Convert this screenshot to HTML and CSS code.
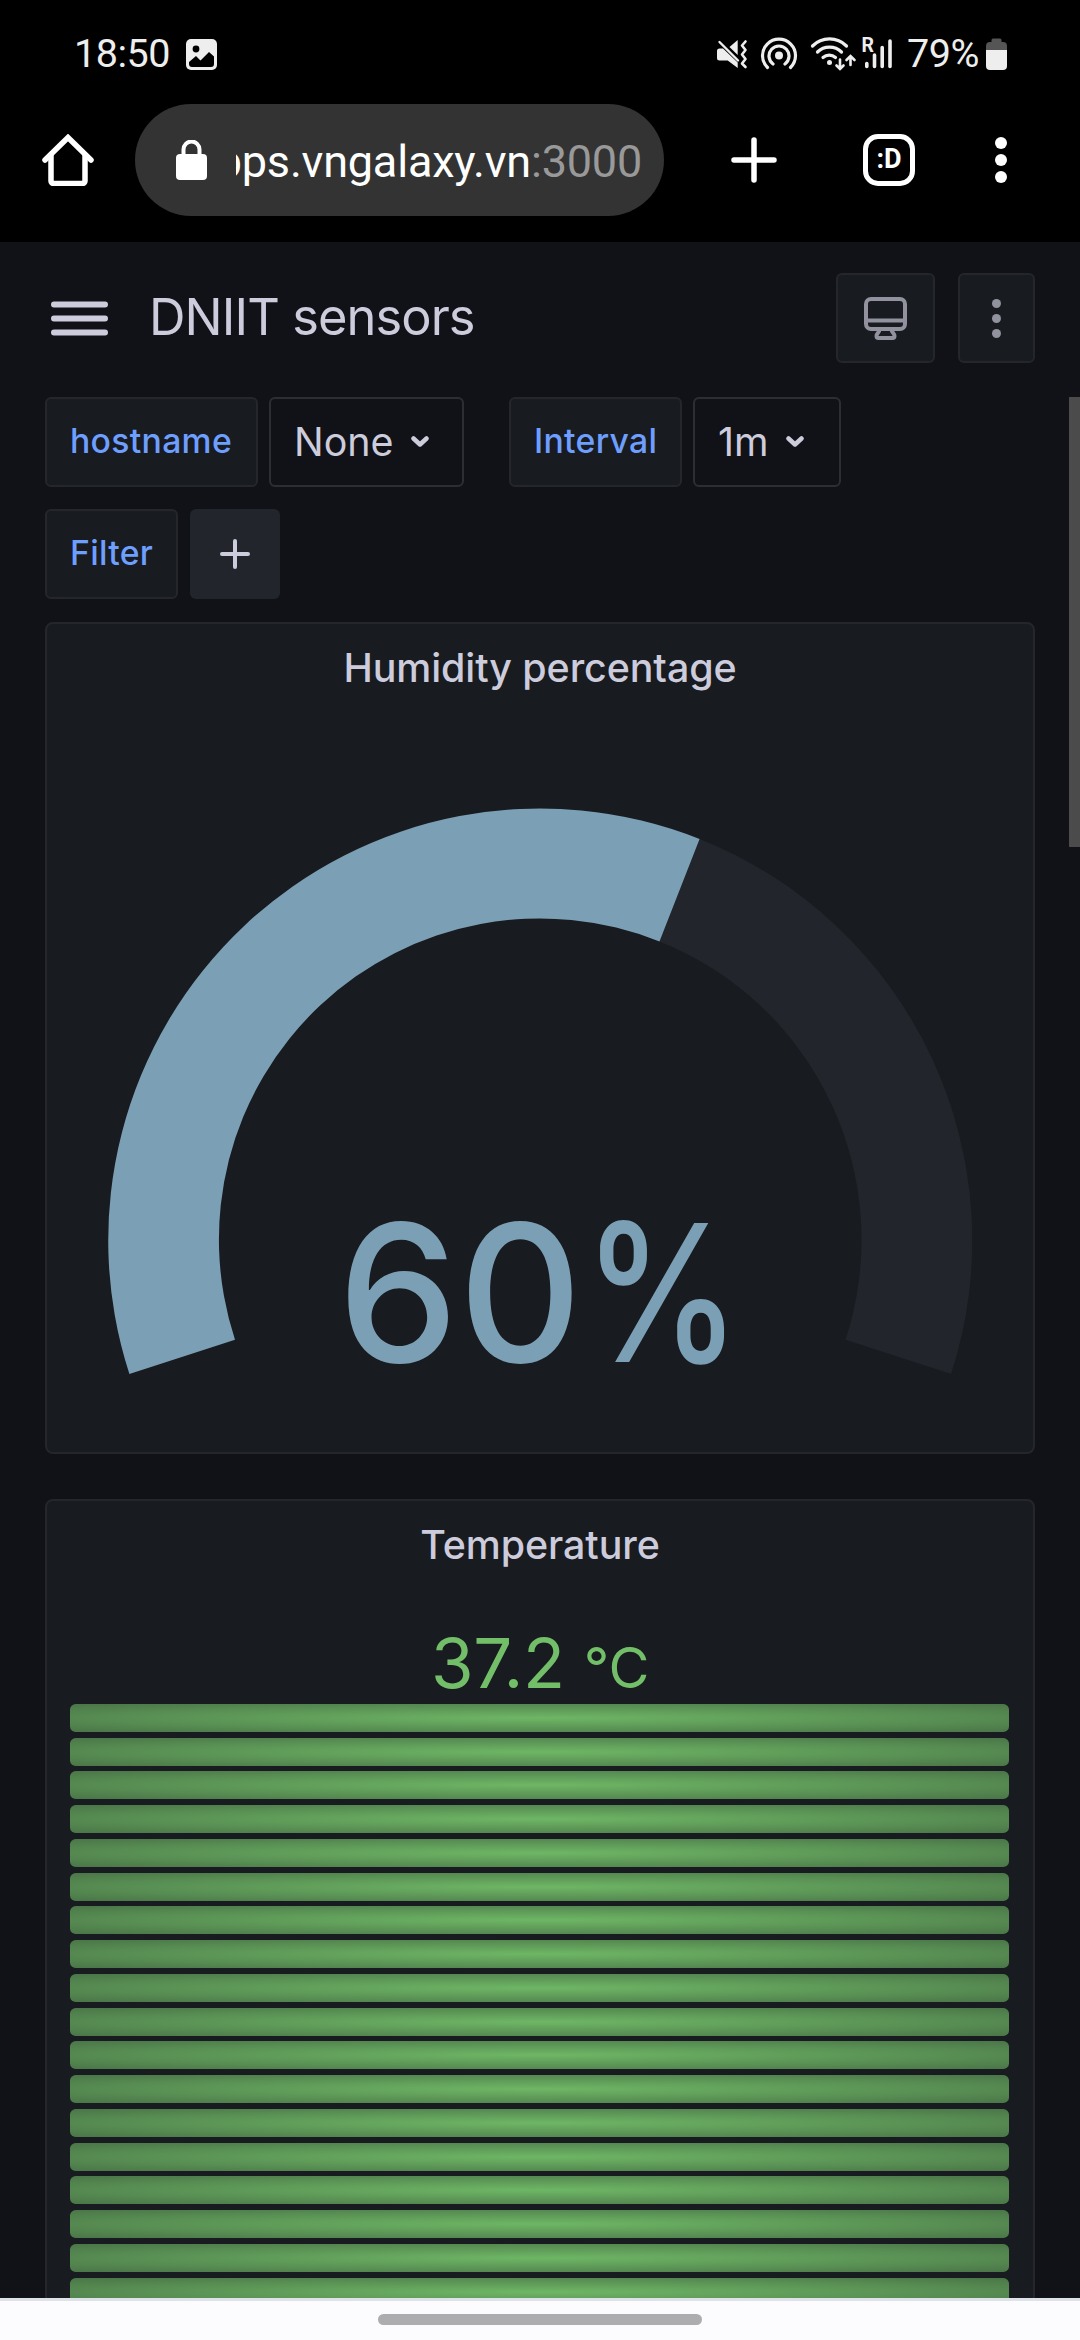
FILE: index.html
```html
<!DOCTYPE html>
<html lang="en">
<head>
<meta charset="utf-8">
<title>DNIIT sensors</title>
<link rel="stylesheet" href="styles.css">
</head>
<body>
<div class="phone">
  <div class="status">
    <span class="clock">18:50</span>
    <svg class="i-photo" width="31" height="31" viewBox="0 0 31 31"><rect width="31" height="31" rx="5" fill="#eee"/><circle cx="10" cy="10" r="3.4"/><path d="M3 23l7-6 4.500 4.500L23 13l5 4.500V25a3 3 0 0 1-3 3H6a3 3 0 0 1-3-3z"/></svg>
    <svg class="i-tray" width="190" height="46" viewBox="716 26 190 46" fill="none" stroke="#eee" stroke-linecap="round">
      <g fill="#eee" stroke="none"><path d="M719.500 48.500H723l14.700 14V68l-10-7.500h-8.200a2.500 2.500 0 0 1-2.500-2.500v-7a2.500 2.500 0 0 1 2.500-2.500z"/><path d="M729.500 47L737.700 40v15z"/></g>
      <path d="M719.500 42l18.500 18.500" stroke-width="2.400"/>
      <path d="M745.500 41.500l-3.500 4 3.500 4.500-3.500 4.500 3.500 4.500-3.500 4.500 3.500 3.500" stroke-width="2.600" stroke-linejoin="round"/>
      <circle cx="779" cy="55.500" r="4" fill="#eee" stroke="none"/>
      <path d="M773 64a10 10 0 1 1 12 0M767.500 67.500a16.500 16.500 0 1 1 23 0" stroke-width="3.200"/>
      <path d="M812.500 46a24 24 0 0 1 34 0M817.500 52a17 17 0 0 1 24 0M823 57.500a9.500 9.500 0 0 1 12.500 0" stroke-width="3.200"/>
      <circle cx="829.500" cy="62.500" r="2.500" fill="#eee" stroke="none"/>
      <path d="M840 59.500v9M836.500 65.500l3.500 3.500 3.500-3.500M850.500 65v-8M846.500 60l4-4 4 4" stroke-width="2.600"/>
      <path d="M866.800 63.500v3M874.500 55v11.500M882.200 47.500v19M890 41v25.500" stroke-width="3.600"/>
      <text class="roam" x="861.500" y="52">R</text>
    </svg>
    <span class="pct">79%</span>
    <svg class="i-batt" width="21" height="32" viewBox="0 0 21 32"><path d="M5.500 4V2a1.500 1.500 0 0 1 1.500-1.500h7A1.500 1.500 0 0 1 15.500 2v2H17a4 4 0 0 1 4 4v4H0V8a4 4 0 0 1 4-4z" fill="#555"/><path d="M0 12h21v16a4 4 0 0 1-4 4H4a4 4 0 0 1-4-4z" fill="#eee"/></svg>
  </div>
  <div class="browser">
    <svg class="i-home" width="52" height="52" viewBox="0 0 52 52" fill="none" stroke="#fff" stroke-width="5.500" stroke-linecap="round" stroke-linejoin="miter"><path d="M3 26L26 3.500 49 26"/><path d="M9 22v25a2.500 2.500 0 0 0 2.500 2.500h29A2.500 2.500 0 0 0 43 47V22"/></svg>
    <div class="url">
      <svg width="31" height="40" viewBox="0 0 31 40"><rect y="14" width="31" height="26" rx="4" fill="#fff"/><path d="M7.500 16v-6.500a8 8 0 0 1 16 0V16" fill="none" stroke="#fff" stroke-width="4"/></svg>
      <div class="addr"><span>apps.vngalaxy.vn<i>:3000</i></span></div>
    </div>
    <svg class="i-plus" width="46" height="46" viewBox="0 0 46 46" stroke="#fff" stroke-width="5.500" stroke-linecap="round"><path d="M23 3v40M3 23h40"/></svg>
    <div class="tabs">:D</div>
    <svg class="i-more" width="12" height="46" viewBox="0 0 12 46" fill="#fff"><circle cx="6" cy="6" r="6"/><circle cx="6" cy="23" r="6"/><circle cx="6" cy="40" r="6"/></svg>
  </div>

  <main class="dash">
    <div class="top">
      <svg class="menu" width="57" height="35" viewBox="0 0 57 35" stroke="#ccccdc" stroke-width="6" stroke-linecap="round"><path d="M3 3.500h51M3 17.500h51M3 31.500h51"/></svg>
      <h1>DNIIT sensors</h1>
      <button class="btn tv"><svg width="43" height="43" viewBox="0 0 43 43" fill="none" stroke="#92929f" stroke-width="4" stroke-linejoin="round"><rect x="2" y="2" width="39" height="30" rx="5"/><path d="M2 23.500h39M15.500 32c0 4-3 4-3 7 0 1.200.800 2 2 2h14c1.200 0 2-.800 2-2 0-3-3-3-3-7"/></svg></button>
      <button class="btn more"><svg width="9" height="39" viewBox="0 0 9 39" fill="#92929f"><circle cx="4.500" cy="4.500" r="4.500"/><circle cx="4.500" cy="19.500" r="4.500"/><circle cx="4.500" cy="34.500" r="4.500"/></svg></button>
    </div>
    <div class="vars">
      <label class="label l-host">hostname</label>
      <div class="select s-host">None<svg width="18" height="12" viewBox="0 0 18 12"><path d="M2.500 2.500L9 8.500l6.500-6"/></svg></div>
      <label class="label l-int">Interval</label>
      <div class="select s-int">1m<svg width="18" height="12" viewBox="0 0 18 12"><path d="M2.500 2.500L9 8.500l6.500-6"/></svg></div>
    </div>
    <div class="vars second">
      <label class="label l-filter">Filter</label>
      <button class="add"><svg width="30" height="30" viewBox="0 0 30 30" stroke="#ccccdc" stroke-width="4" stroke-linecap="round"><path d="M15 2v26M2 15h26"/></svg></button>
    </div>
    <section class="panel gauge">
      <h2>Humidity percentage</h2>
      <svg width="986" height="738" viewBox="47 714 986 738">
        <path d="M699.600 838.900A432 432 0 0 1 951.100 1374L845.500 1339.700A321 321 0 0 0 659.500 941.500z" fill="#22252b"/>
        <path d="M129.400 1374A432 432 0 0 1 699.600 838.900L659.500 941.500A321 321 0 0 0 235 1339.700z" fill="#7b9fb5"/>
        <text x="460" y="1362" text-anchor="middle">60</text>
        <text class="unit" transform="translate(662 1362) scale(.826 1)" text-anchor="middle">%</text>
      </svg>
    </section>
    <section class="panel temp">
      <h2>Temperature</h2>
      <p class="value">37.2<span>°C</span></p>
      <div class="cells">
        <b></b><b></b><b></b><b></b><b></b><b></b><b></b><b></b><b></b><b></b><b></b><b></b><b></b><b></b><b></b><b></b><b></b><b></b>
      </div>
    </section>
    <div class="scroll"></div>
  </main>
  <footer class="nav"><div></div></footer>
</div>
</body>
</html>
```
FILE: styles.css
```css
* { box-sizing: border-box; margin: 0; padding: 0; }
body { background: #111217; font-family: Inter, "Liberation Sans", sans-serif; color: #ccccdc; }
svg { display: block; flex: none; }
button { border: 0; font: inherit; }
.phone { width: 1080px; height: 2340px; overflow: hidden; display: flex; flex-direction: column; }

.status { background: #000; height: 92px; flex: none; display: flex; align-items: flex-start; font: 39.500px/46px Roboto, sans-serif; color: #eee; padding-left: 74px; }
.clock, .pct { margin-top: 30.500px; letter-spacing: -0.500px; }
.clock { width: 112px; }
.i-photo { margin-top: 39px; }
.i-tray { margin: 26px 0 0 499px; }
.pct { width: 78px; margin-left: 1px; }
.i-batt { margin: 38px 0 0 1px; }
.roam { font: 700 19.500px Roboto, sans-serif; fill: #eee; stroke: none; }

.browser { background: #000; height: 150px; flex: none; display: flex; align-items: center; padding: 0 0 14px 42px; }
.url { margin-left: 41px; width: 529px; height: 112px; border-radius: 56px; background: #333; display: flex; align-items: center; padding-left: 41px; }
.addr { margin-left: 29px; width: 406px; overflow: hidden; display: flex; justify-content: flex-end; padding-top: 3px; font: 45px/60px Roboto, sans-serif; letter-spacing: -0.200px; color: #fff; white-space: nowrap; }
.addr i { font-style: normal; color: #999; }
.i-plus { margin-left: 67px; }
.tabs { margin-left: 86px; width: 52px; height: 52px; border: 5.500px solid #fff; border-radius: 15px; color: #fff; font: 700 27px/40px Roboto, sans-serif; text-align: center; }
.i-more { margin-left: 80px; }

.dash { position: relative; height: 2056px; flex: none; overflow: hidden; padding: 31px 45px 0; }
.top { display: flex; align-items: center; height: 90px; padding-left: 6px; }
h1 { font-size: 50.600px; line-height: 60px; font-weight: 400; letter-spacing: -0.920px; margin: 0 0 2px 41px; flex: 1; white-space: nowrap; }
.btn { height: 90px; background: #181b1f; border: 2px solid #24262b; border-radius: 6px; display: flex; align-items: center; justify-content: center; }
.tv { width: 99px; }
.more { width: 77px; margin-left: 23px; }
.vars { display: flex; margin-top: 34px; height: 90px; }
.vars.second { margin-top: 22px; }
.label, .select { height: 90px; border: 2px solid #24262b; border-radius: 6px; padding-left: 23px; white-space: nowrap; }
.label { background: #181b1f; color: #6e9fff; font-size: 33.750px; font-weight: 500; line-height: 84px; letter-spacing: 0.300px; }
.select { display: flex; align-items: center; border-color: #2d2e34; font-size: 39.400px; line-height: 84px; padding-bottom: 1px; }
.select svg { fill: none; stroke: #ccccdc; stroke-width: 4.500; stroke-linecap: round; stroke-linejoin: round; margin-left: 17px; }
.l-host { width: 213px; }
.s-host { width: 195px; margin-left: 11px; }
.l-int { width: 173px; margin-left: 45px; }
.s-int { width: 148px; margin-left: 11px; }
.l-filter { width: 133px; }
.add { width: 90px; height: 90px; margin-left: 12px; border-radius: 6px; background: #22252b; display: flex; align-items: center; justify-content: center; }
.panel { background: #181b1f; border: 2px solid #24262b; border-radius: 8px; width: 990px; }
h2 { font-size: 39.400px; font-weight: 500; line-height: 88px; height: 90px; text-align: center; letter-spacing: -0.080px; }
.gauge { margin-top: 23px; height: 832px; }
.gauge text { font: 500 191.600px Inter, sans-serif; fill: #7b9fb5; }
.temp { margin-top: 45px; height: 1000px; }
.value { height: 112.750px; padding-top: 30px; text-align: center; font-size: 69px; line-height: 84px; color: #73bf69; letter-spacing: -0.300px; }
.value span { font-size: 56px; margin-left: 19px; }
.cells { margin: 0 24px 0 23px; display: grid; row-gap: 5.625px; }
.cells b { height: 28.125px; border-radius: 5.600px; background: radial-gradient(rgba(115,191,105,.95), rgba(115,191,105,.55)); }
.scroll { position: absolute; right: 0; top: 155px; width: 11px; height: 450px; background: #4b4b4b; }

.nav { height: 42px; flex: none; background: #fcfcfe; border-top: 3px solid #dde3e8; padding-top: 13px; }
.nav div { width: 324px; height: 11px; border-radius: 6px; background: #adadaf; margin: 0 auto; }
```
